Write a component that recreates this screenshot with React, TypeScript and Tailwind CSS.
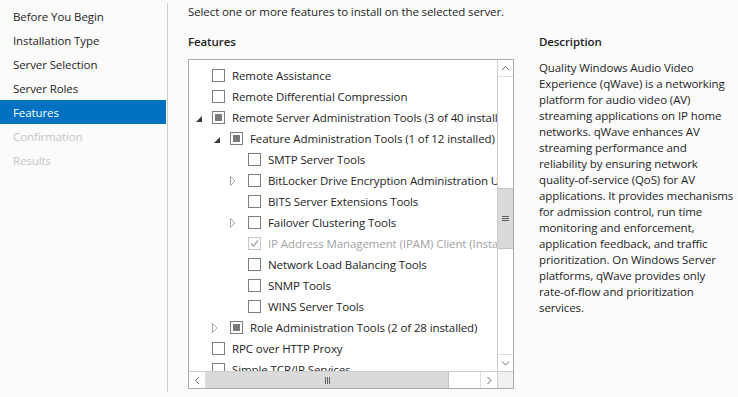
import React from "react";

type State = "unchecked" | "indeterminate" | "checkedDisabled";
type Exp = "none" | "expanded" | "collapsed";
interface Row {
  level: number;
  label: string;
  state?: State;
  exp?: Exp;
}

const rows: Row[] = [
  { level: 0, label: "Remote Assistance" },
  { level: 0, label: "Remote Differential Compression" },
  { level: 0, label: "Remote Server Administration Tools (3 of 40 installed)", state: "indeterminate", exp: "expanded" },
  { level: 1, label: "Feature Administration Tools (1 of 12 installed)", state: "indeterminate", exp: "expanded" },
  { level: 2, label: "SMTP Server Tools" },
  { level: 2, label: "BitLocker Drive Encryption Administration Utilities", exp: "collapsed" },
  { level: 2, label: "BITS Server Extensions Tools" },
  { level: 2, label: "Failover Clustering Tools", exp: "collapsed" },
  { level: 2, label: "IP Address Management (IPAM) Client (Installed)", state: "checkedDisabled" },
  { level: 2, label: "Network Load Balancing Tools" },
  { level: 2, label: "SNMP Tools" },
  { level: 2, label: "WINS Server Tools" },
  { level: 1, label: "Role Administration Tools (2 of 28 installed)", state: "indeterminate", exp: "collapsed" },
  { level: 0, label: "RPC over HTTP Proxy" },
  { level: 0, label: "Simple TCP/IP Services" },
];

const navItems: { label: string; kind: "normal" | "active" | "disabled" }[] = [
  { label: "Before You Begin", kind: "normal" },
  { label: "Installation Type", kind: "normal" },
  { label: "Server Selection", kind: "normal" },
  { label: "Server Roles", kind: "normal" },
  { label: "Features", kind: "active" },
  { label: "Confirmation", kind: "disabled" },
  { label: "Results", kind: "disabled" },
];

const descLines = [
  "Quality Windows Audio Video",
  "Experience (qWave) is a networking",
  "platform for audio video (AV)",
  "streaming applications on IP home",
  "networks. qWave enhances AV",
  "streaming performance and",
  "reliability by ensuring network",
  "quality-of-service (QoS) for AV",
  "applications. It provides mechanisms",
  "for admission control, run time",
  "monitoring and enforcement,",
  "application feedback, and traffic",
  "prioritization. On Windows Server",
  "platforms, qWave provides only",
  "rate-of-flow and prioritization",
  "services.",
];

function Checkbox({ state }: { state: State }) {
  if (state === "checkedDisabled") {
    return (
      <div className="w-[13px] h-[13px] border border-[#c6c6c6] bg-white shrink-0 flex items-center justify-center">
        <svg width="11" height="11" viewBox="0 0 11 11">
          <path d="M2 5.5 L4.5 8 L9 2.5" fill="none" stroke="#a8a8a8" strokeWidth="1.3" />
        </svg>
      </div>
    );
  }
  return (
    <div className="w-[13px] h-[13px] border border-[#7d7d7d] bg-white shrink-0 flex items-center justify-center">
      {state === "indeterminate" && <div className="w-[7px] h-[7px] bg-[#7a7a7a]" />}
    </div>
  );
}

function Expander({ exp }: { exp: Exp }) {
  return (
    <div className="w-[18px] h-full shrink-0 flex items-center">
      {exp === "expanded" && (
        <svg width="6" height="6" viewBox="0 0 6 6" className="ml-[2px] mt-[2px]">
          <path d="M6 0 L6 6 L0 6 Z" fill="#3a3a3a" />
        </svg>
      )}
      {exp === "collapsed" && (
        <svg width="6" height="10" viewBox="0 0 6 10">
          <path d="M0.5 0.5 L5 5 L0.5 9.5 Z" fill="none" stroke="#a8a8a8" strokeWidth="1" />
        </svg>
      )}
    </div>
  );
}

function Chevron({ dir }: { dir: "up" | "down" | "left" | "right" }) {
  const d =
    dir === "up"
      ? "M1 5 L4.5 1.5 L8 5"
      : dir === "down"
      ? "M1 1.5 L4.5 5 L8 1.5"
      : dir === "left"
      ? "M5 1 L1.5 4.5 L5 8"
      : "M1.5 1 L5 4.5 L1.5 8";
  const w = dir === "up" || dir === "down" ? 9 : 7;
  const h = dir === "up" || dir === "down" ? 7 : 9;
  return (
    <svg width={w} height={h} viewBox={`0 0 ${w} ${h}`}>
      <path d={d} fill="none" stroke="#6a6a6a" strokeWidth="1" />
    </svg>
  );
}

export default function App() {
  return (
    <div
      className="w-[738px] h-[397px] overflow-hidden bg-[#fbfbfb] flex text-[11.5px] tracking-[-0.1px] text-[#1e1e1e]"
      style={{ fontFamily: '"Segoe UI", "Open Sans", sans-serif' }}
    >
      {/* Left nav */}
      <div className="w-[166px] shrink-0 pt-[4px]">
        {navItems.map((n) => (
          <div
            key={n.label}
            className={
              "h-[24px] flex items-center pl-[13px] " +
              (n.kind === "active"
                ? "bg-[#0071c1] text-white"
                : n.kind === "disabled"
                ? "text-[#c6c6c6]"
                : "text-[#1e1e1e]")
            }
          >
            <span className="mt-[1px]">{n.label}</span>
          </div>
        ))}
      </div>
      <div className="w-px bg-[#cfcfcf] ml-[1px] mt-[3px] mb-[5px]" />

      {/* Main */}
      <div className="flex-1 pl-[20px] pt-[4px]">
        <div className="leading-[16px] whitespace-nowrap">
          Select one or more features to install on the selected server.
        </div>
        <div className="flex mt-[14px]">
          <div className="w-[326px] shrink-0">
            <div className="leading-[16px] font-semibold mb-[9px]">Features</div>
            <div className="w-[326px] h-[330px] border border-[#ababab] bg-white grid grid-cols-[308px_16px] grid-rows-[311px_17px]">
              {/* content */}
              <div className="overflow-hidden pt-[5px]">
                {rows.map((r, i) => (
                  <div
                    key={i}
                    className="h-[21px] flex items-center whitespace-nowrap"
                    style={{ paddingLeft: 5 + r.level * 18 }}
                  >
                    <Expander exp={r.exp ?? "none"} />
                    <Checkbox state={r.state ?? "unchecked"} />
                    <span
                      className={
                        "ml-[7px] " + (r.state === "checkedDisabled" ? "text-[#a3a3a3]" : "text-[#1e1e1e]")
                      }
                    >
                      {r.label}
                    </span>
                  </div>
                ))}
              </div>
              {/* vertical scrollbar */}
              <div className="border-l border-[#cdcdcd] flex flex-col bg-white">
                <div className="h-[17px] border-b border-[#dcdcdc] flex items-center justify-center">
                  <Chevron dir="up" />
                </div>
                <div className="flex-1">
                  <div className="mt-[111px] h-[61px] bg-[#dadada] border-y border-[#c2c2c2] flex items-center justify-center">
                    <svg width="7" height="7" viewBox="0 0 7 7">
                      <path d="M0 1.5 H7 M0 3.5 H7 M0 5.5 H7" stroke="#606060" strokeWidth="1" />
                    </svg>
                  </div>
                </div>
                <div className="h-[17px] border-t border-[#dcdcdc] flex items-center justify-center">
                  <Chevron dir="down" />
                </div>
              </div>
              {/* horizontal scrollbar */}
              <div className="border-t border-[#cdcdcd] flex bg-white">
                <div className="w-[17px] border-r border-[#dcdcdc] flex items-center justify-center">
                  <Chevron dir="left" />
                </div>
                <div className="w-[243px] bg-[#dadada] border-r border-[#c2c2c2] flex items-center justify-center">
                  <svg width="7" height="7" viewBox="0 0 7 7">
                    <path d="M1.5 0 V7 M3.5 0 V7 M5.5 0 V7" stroke="#606060" strokeWidth="1" />
                  </svg>
                </div>
                <div className="flex-1" />
                <div className="w-[17px] border-l border-[#dcdcdc] flex items-center justify-center">
                  <Chevron dir="right" />
                </div>
              </div>
              <div className="border-l border-t border-[#cdcdcd] bg-[#f0f0f0]" />
            </div>
          </div>
          <div className="ml-[25px] w-[199px]">
            <div className="leading-[16px] font-semibold">Description</div>
            <div className="mt-[10px] leading-[16px] whitespace-nowrap">
              {descLines.map((l) => (
                <div key={l}>{l}</div>
              ))}
            </div>
          </div>
        </div>
      </div>
    </div>
  );
}
